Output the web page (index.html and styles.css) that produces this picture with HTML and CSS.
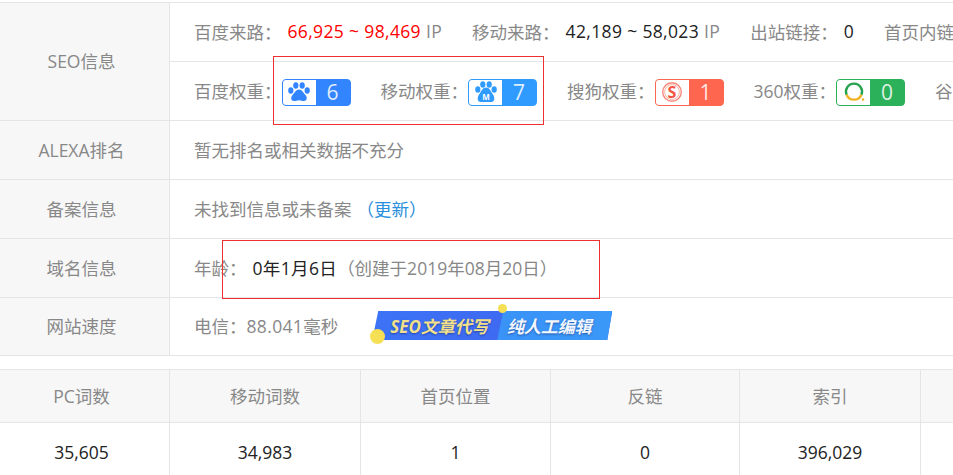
FILE: index.html
```html
<!doctype html>
<html lang="zh-CN">
<head>
    <meta charset="utf-8" />
    <title>SEO信息</title>
    <link rel="stylesheet" href="styles.css">
</head>
<body>
    <div class="info">
        <div class="info-row seo-row">
            <div class="label">SEO信息</div>
            <div class="seo-lines">
                <div class="line">
                    <span class="item">百度来路：<span class="num red first">66,925 ~ 98,469</span><span class="num ip">IP</span></span>
                    <span class="item">移动来路：<span class="num dark first">42,189 ~ 58,023</span><span class="num ip">IP</span></span>
                    <span class="item">出站链接：<span class="num dark first">0</span></span>
                    <span class="item">首页内链</span>
                </div>
                <div class="line">
                    <span class="item">百度权重：<span class="badge baidu"><span class="badge-icon">
                        <svg width="24" height="22" viewBox="0 0 24 22"><g fill="#3385ff"><ellipse cx="3.800" cy="9.500" rx="2.600" ry="3.200"/><ellipse cx="8.800" cy="4.500" rx="2.600" ry="3.300"/><ellipse cx="15.200" cy="4.500" rx="2.600" ry="3.300"/><ellipse cx="20.200" cy="9.500" rx="2.600" ry="3.200"/><path d="M12 8.500c-3 0-4 3-6.500 5.500-2.200 2.300-1.500 6 1.500 6 2 0 3-.8 5-.8s3 .8 5 .8c3 0 3.700-3.700 1.500-6C16 11.500 15 8.500 12 8.500z"/></g></svg>
                    </span><span class="badge-num">6</span></span></span>
                    <span class="item">移动权重：<span class="badge mobile"><span class="badge-icon">
                        <svg width="24" height="22" viewBox="0 0 24 22"><g fill="#2f9bff"><ellipse cx="3.800" cy="8.500" rx="2.600" ry="3.200"/><ellipse cx="8.800" cy="3.500" rx="2.600" ry="3.200"/><ellipse cx="15.200" cy="3.500" rx="2.600" ry="3.200"/><ellipse cx="20.200" cy="8.500" rx="2.600" ry="3.200"/><path d="M12 6.500c-3.500 0-4.500 3.500-7 7-2.200 3.200-1.500 7.500 1.500 7.500h11c3 0 3.700-4.300 1.500-7.500-2.500-3.500-3.500-7-7-7z"/></g><text x="12" y="18.500" class="paw-m">M</text></svg>
                    </span><span class="badge-num">7</span></span></span>
                    <span class="item">搜狗权重：<span class="badge sogou"><span class="badge-icon">
                        <svg width="24" height="22" viewBox="0 0 24 22"><circle cx="12" cy="11" r="9.300" fill="none" stroke="#f7897a" stroke-width="1.400"/><circle cx="12" cy="11" r="7.400" fill="none" stroke="#f9b5ab" stroke-width="1"/><text x="12" y="16.500" class="sogou-s">S</text></svg>
                    </span><span class="badge-num">1</span></span></span>
                    <span class="item">360权重：<span class="badge so360"><span class="badge-icon">
                        <svg width="24" height="22" viewBox="0 0 24 22"><path d="M4.600 13.700a8 8 0 1 1 14.800 0" fill="none" stroke="#27a34f" stroke-width="2.400"/><path d="M4.600 13.700a8 8 0 0 0 14.800 0" fill="none" stroke="#f0b323" stroke-width="2.400"/><circle cx="21" cy="18.500" r="1.300" fill="#f0b323"/></svg>
                    </span><span class="badge-num">0</span></span></span>
                    <span class="item">谷</span>
                </div>
            </div>
        </div>
        <div class="info-row">
            <div class="label">ALEXA排名</div>
            <div class="value">暂无排名或相关数据不充分</div>
        </div>
        <div class="info-row">
            <div class="label">备案信息</div>
            <div class="value">未找到信息或未备案<a class="update" href="#">（更新）</a></div>
        </div>
        <div class="info-row">
            <div class="label">域名信息</div>
            <div class="value">年龄：<span class="num dark first">0年1月6日</span>（创建于2019年08月20日）</div>
        </div>
        <div class="info-row last-row">
            <div class="label">网站速度</div>
            <div class="value">电信：<span class="num">88.041</span>毫秒
                <div class="promo">
                    <span class="dot dot-big"></span>
                    <span class="dot dot-small"></span>
                    <div class="promo-bg"></div>
                    <div class="promo-bg promo-bg-right"></div>
                    <span class="promo-a">SEO文章代写</span>
                    <span class="promo-b">纯人工编辑</span>
                </div>
            </div>
        </div>
    </div>

    <div class="stats">
        <div class="cell head col-first">PC词数</div>
        <div class="cell head">移动词数</div>
        <div class="cell head">首页位置</div>
        <div class="cell head">反链</div>
        <div class="cell head">索引</div>
        <div class="cell head"></div>
        <div class="cell col-first">35,605</div>
        <div class="cell">34,983</div>
        <div class="cell">1</div>
        <div class="cell">0</div>
        <div class="cell">396,029</div>
        <div class="cell"></div>
    </div>

    <div class="mark mark-one"></div>
    <div class="mark mark-two"></div>
</body>
</html>
```

FILE: styles.css
```css
html, body {
    margin: 0;
    height: 475px;
    overflow: hidden;
}

body {
    position: relative;
    padding-top: 2px;
    box-sizing: border-box;
    font-family: "Open Sans", "Noto Sans CJK SC", sans-serif;
    font-size: 17.5px;
    color: #888;
    background-color: #fff;
}

.info {
    border-top: 1px solid #e5e5e5;
}

.info-row {
    display: flex;
    height: 58px;
    border-bottom: 1px solid #e5e5e5;
    white-space: nowrap;
}

.seo-row {
    height: 117px;
}

.last-row {
    height: 57px;
}

.label {
    flex: 0 0 170px;
    display: flex;
    align-items: center;
    justify-content: center;
    padding: 0 6px 2px 0;
    box-sizing: border-box;
    background-color: #f7f7f7;
    border-right: 1px solid #e5e5e5;
}

.value {
    display: flex;
    align-items: center;
    padding: 0 0 2px 24px;
}

.seo-lines {
    flex: 1;
    min-width: 0;
}

.line {
    display: flex;
    align-items: center;
    gap: 30px;
    height: 58px;
    padding: 0 0 2px 24px;
    box-sizing: border-box;
}

.line + .line {
    height: 59px;
    border-top: 1px solid #e5e5e5;
}

.item {
    display: flex;
    align-items: center;
    flex: none;
}

.num {
    letter-spacing: 0.35px;
}

.num.first {
    margin-left: 6px;
}

.ip {
    margin-left: 5px;
}

.red {
    color: #f00;
}

.dark {
    color: #222;
}

.update {
    color: #2a8fdc;
    text-decoration: none;
    margin-left: 5px;
}

.badge {
    display: flex;
    width: 69px;
    height: 27px;
    margin-top: 2px;
    margin-bottom: -2px;
    box-sizing: border-box;
    border: 1px solid;
    border-radius: 4px;
    overflow: hidden;
    color: rgba(255, 255, 255, 0.85);
    font-size: 21px;
}

.badge-icon {
    flex: 0 0 33px;
    display: flex;
    align-items: center;
    justify-content: center;
    background-color: #fff;
}

.badge-num {
    flex: 1;
    display: flex;
    align-items: center;
    justify-content: center;
}

.baidu {
    border-color: #3385ff;
    background-color: #3385ff;
}

.mobile {
    border-color: #2f9bff;
    background-color: #2f9bff;
}

.sogou {
    border-color: #ff6650;
    background-color: #ff6650;
}

.so360 {
    border-color: #2bb15a;
    background-color: #2bb15a;
}

.paw-m {
    font-size: 8px;
    font-weight: bold;
    fill: #fff;
    text-anchor: middle;
}

.sogou-s {
    font-size: 16px;
    font-weight: bold;
    fill: #f0553f;
    text-anchor: middle;
}

.promo {
    position: relative;
    display: flex;
    align-items: center;
    width: 240px;
    height: 29px;
    margin-left: 34px;
}

.promo-bg {
    position: absolute;
    inset: 0;
    background: linear-gradient(90deg, #3c73f6, #3f63ec);
    clip-path: polygon(6px 0, 240px 0, 235px 100%, 0 100%);
}

.promo-bg-right {
    background: linear-gradient(90deg, #3a8cf6, #3a98f8);
    clip-path: polygon(131px 0, 240px 0, 235px 100%, 125px 100%);
}

.promo-a, .promo-b {
    position: relative;
    z-index: 1;
    font-weight: bold;
    font-style: italic;
    font-size: 17px;
    text-shadow: 0 1px 2px rgba(0, 0, 60, 0.4);
}

.promo-a {
    margin-left: 18px;
    color: #f3e08a;
}

.promo-b {
    margin-left: 18px;
    color: #f2f6ff;
}

.dot {
    position: absolute;
    z-index: 2;
    border-radius: 50%;
    background-color: #f5df55;
}

.dot-big {
    left: -2px;
    top: 18px;
    width: 15px;
    height: 15px;
}

.dot-small {
    left: 126px;
    top: -7px;
    width: 9px;
    height: 9px;
}

.stats {
    display: grid;
    grid-template-columns: 170px 191px 190px 189px 181px 1fr;
    grid-template-rows: 53px 60px;
    margin-top: 13px;
    border-top: 1px solid #e5e5e5;
}

.cell {
    display: flex;
    align-items: center;
    justify-content: center;
    padding-bottom: 2px;
    border-right: 1px solid #e5e5e5;
    box-sizing: border-box;
    color: #222;
}

.col-first {
    padding-right: 6px;
}

.head {
    background-color: #f7f7f7;
    border-bottom: 1px solid #e5e5e5;
    color: #888;
}

.cell:nth-child(6n) {
    border-right: none;
}

.mark {
    position: absolute;
    box-sizing: border-box;
    border: 1px solid #f03030;
}

.mark-one {
    left: 273px;
    top: 56px;
    width: 271px;
    height: 69px;
}

.mark-two {
    left: 222px;
    top: 240px;
    width: 378px;
    height: 59px;
}
```
